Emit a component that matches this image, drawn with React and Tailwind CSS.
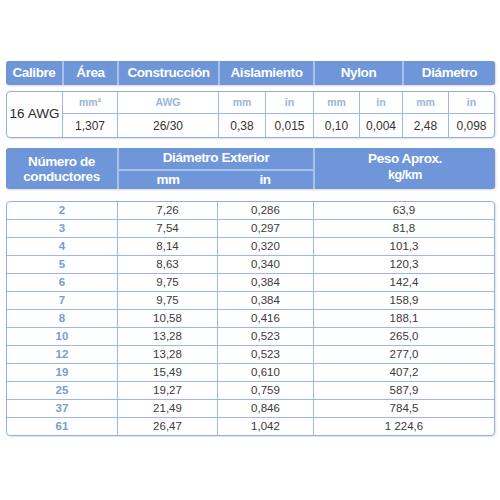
import React from 'react';

const rows = [
  ['2', '7,26', '0,286', '63,9'],
  ['3', '7,54', '0,297', '81,8'],
  ['4', '8,14', '0,320', '101,3'],
  ['5', '8,63', '0,340', '120,3'],
  ['6', '9,75', '0,384', '142,4'],
  ['7', '9,75', '0,384', '158,9'],
  ['8', '10,58', '0,416', '188,1'],
  ['10', '13,28', '0,523', '265,0'],
  ['12', '13,28', '0,523', '277,0'],
  ['19', '15,49', '0,610', '407,2'],
  ['25', '19,27', '0,759', '587,9'],
  ['37', '21,49', '0,846', '784,5'],
  ['61', '26,47', '1,042', '1 224,6'],
];

const units = [
  ['mm²', '1,307'],
  ['AWG', '26/30'],
  ['mm', '0,38'],
  ['in', '0,015'],
  ['mm', '0,10'],
  ['in', '0,004'],
  ['mm', '2,48'],
  ['in', '0,098'],
];

const App = () => {
  const head = 'flex items-center justify-center text-white font-bold text-[13.5px] tracking-[-0.4px]';

  return (
    <div className="min-h-[500px] w-[500px] bg-white pt-[61px] pl-[6px] font-['Liberation_Sans',Arial,sans-serif]">
      {/* top header */}
      <div className="w-[489px] h-[24px] grid grid-cols-[56px_55px_101px_95px_89px_93px] bg-[#6e96d8] rounded-[3px] shadow-[1px_1px_2px_rgba(0,0,0,0.15)]">
        <div className={head}>Calibre</div>
        <div className={`${head} border-l-2 border-[#a9c2ec]`}>Área</div>
        <div className={`${head} border-l-2 border-[#a9c2ec]`}>Construcción</div>
        <div className={`${head} border-l-2 border-[#a9c2ec]`}>Aislamiento</div>
        <div className={`${head} border-l-2 border-[#a9c2ec]`}>Nylon</div>
        <div className={`${head} border-l-2 border-[#a9c2ec]`}>Diámetro</div>
      </div>

      {/* calibre values */}
      <div className="mt-[6px] w-[489px] h-[47px] border border-[#8fb0e2] rounded-[4px] grid grid-cols-[55px_55px_101px_47px_48px_46px_43px_46px_46px] grid-rows-[21px_24px] shadow-[1px_1px_2px_rgba(0,0,0,0.12)]">
        <div className="row-span-2 flex items-center justify-center text-[13.5px] text-[#2b2b2b]">16 AWG</div>
        {units.map(([u], i) => (
          <div key={'u' + i} className="flex items-center justify-center border-l border-[#9bb8e6] text-[10.5px] font-bold text-[#9db3da]">
            {u}
          </div>
        ))}
        {units.map(([, v], i) => (
          <div key={'v' + i} className="flex items-center justify-center border-l border-t border-[#9bb8e6] text-[12px] text-[#333]">
            {v}
          </div>
        ))}
      </div>

      {/* conductores header */}
      <div className="mt-[10px] w-[489px] h-[41px] grid grid-cols-[111px_196px_182px] grid-rows-[21px_20px] bg-[#6e96d8] rounded-[3px] shadow-[1px_1px_2px_rgba(0,0,0,0.15)]">
        <div className={`${head} row-span-2 flex-col leading-[15px]`}>
          <span>Número de</span>
          <span>conductores</span>
        </div>
        <div className={`${head} border-l-2 border-[#a9c2ec]`}>Diámetro Exterior</div>
        <div className={`${head} row-span-2 flex-col border-l-2 border-[#a9c2ec] justify-start pt-[3px] leading-[16px]`}>
          <span>Peso Aprox.</span>
          <span className="text-[12.5px]">kg/km</span>
        </div>
        <div className="flex border-l-2 border-t-2 border-[#a9c2ec]">
          <div className={`${head} w-[98px]`}>mm</div>
          <div className={`${head} flex-1`}>in</div>
        </div>
      </div>

      {/* data */}
      <div className="mt-[12px] w-[489px] border border-[#8fb0e2] rounded-[4px] shadow-[1px_1px_2px_rgba(0,0,0,0.12)]">
        {rows.map((r, i) => (
          <div
            key={r[0]}
            className={`grid grid-cols-[110px_100px_96px_181px] ${i === 0 ? 'h-[17px]' : 'h-[18px] border-t border-[#9bb8e6]'}`}
          >
            <div className="flex items-center justify-center text-[11.5px] font-bold text-[#7b9bd3]">{r[0]}</div>
            <div className="flex items-center justify-center border-l border-[#9bb8e6] text-[11.5px] text-[#3a3a3a]">{r[1]}</div>
            <div className="flex items-center justify-center border-l border-[#9bb8e6] text-[11.5px] text-[#3a3a3a]">{r[2]}</div>
            <div className="flex items-center justify-center border-l border-[#9bb8e6] text-[11.5px] text-[#3a3a3a]">{r[3]}</div>
          </div>
        ))}
      </div>
    </div>
  );
};

export default App;
